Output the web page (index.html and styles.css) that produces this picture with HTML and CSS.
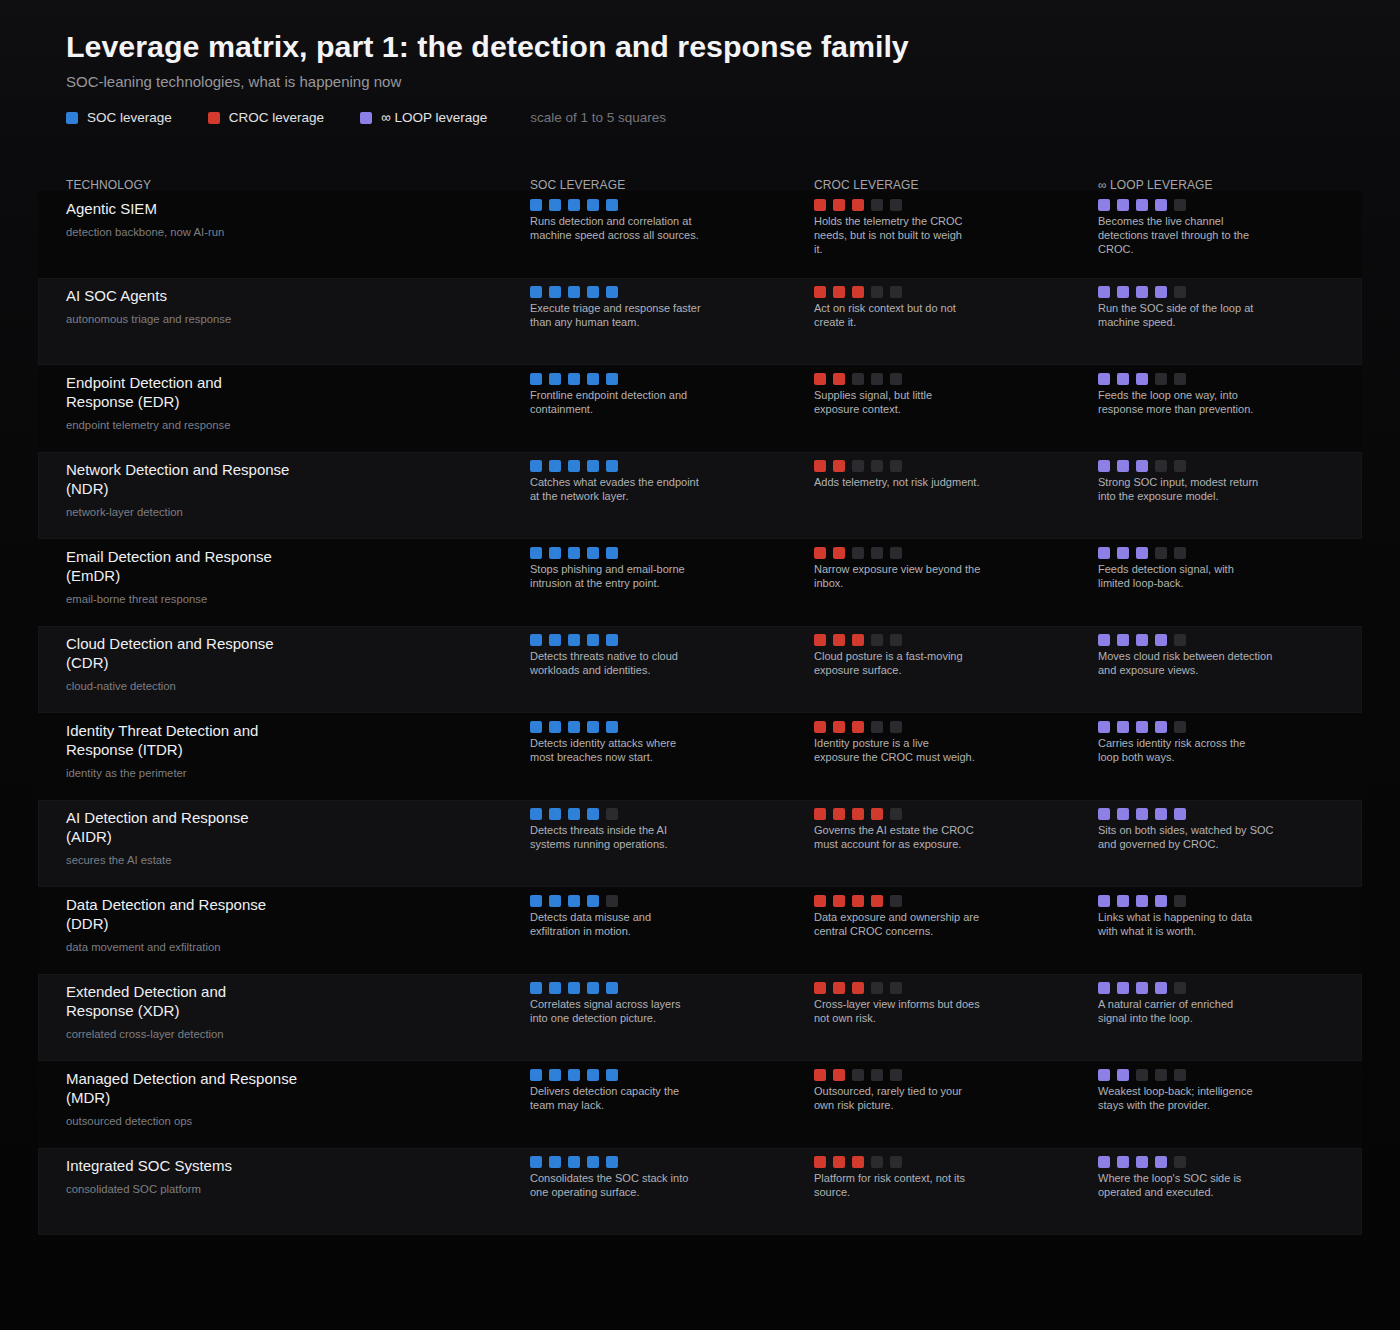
FILE: index.html
```html
<!DOCTYPE html>
<html lang="en">
<head>
<meta charset="utf-8">
<title>Leverage matrix, part 1</title>
<link rel="stylesheet" href="styles.css">
</head>
<body>
<div class="page">
  <header class="intro">
    <h1 class="title">Leverage matrix, part 1: the detection and response family</h1>
    <p class="subtitle">SOC-leaning technologies, what is happening now</p>
    <div class="legend">
      <span class="legend-item"><span class="sq soc"></span>SOC leverage</span>
      <span class="legend-item"><span class="sq croc"></span>CROC leverage</span>
      <span class="legend-item"><span class="sq loop"></span>∞ LOOP leverage</span>
      <span class="legend-note">scale of 1 to 5 squares</span>
    </div>
  </header>

  <div class="matrix">
    <div class="head">
      <div>TECHNOLOGY</div>
      <div>SOC LEVERAGE</div>
      <div>CROC LEVERAGE</div>
      <div>∞ LOOP LEVERAGE</div>
    </div>

    <div class="row dark">
      <div class="tech"><div class="name">Agentic SIEM</div><div class="tag">detection backbone, now AI-run</div></div>
      <div class="cell"><div class="bar soc s5"><i></i><i></i><i></i><i></i><i></i></div><p>Runs detection and correlation at<br>machine speed across all sources.</p></div>
      <div class="cell"><div class="bar croc s3"><i></i><i></i><i></i><i></i><i></i></div><p>Holds the telemetry the CROC<br>needs, but is not built to weigh<br>it.</p></div>
      <div class="cell"><div class="bar loop s4"><i></i><i></i><i></i><i></i><i></i></div><p>Becomes the live channel<br>detections travel through to the<br>CROC.</p></div>
    </div>

    <div class="row light">
      <div class="tech"><div class="name">AI SOC Agents</div><div class="tag">autonomous triage and response</div></div>
      <div class="cell"><div class="bar soc s5"><i></i><i></i><i></i><i></i><i></i></div><p>Execute triage and response faster<br>than any human team.</p></div>
      <div class="cell"><div class="bar croc s3"><i></i><i></i><i></i><i></i><i></i></div><p>Act on risk context but do not<br>create it.</p></div>
      <div class="cell"><div class="bar loop s4"><i></i><i></i><i></i><i></i><i></i></div><p>Run the SOC side of the loop at<br>machine speed.</p></div>
    </div>

    <div class="row dark">
      <div class="tech"><div class="name">Endpoint Detection and<br>Response (EDR)</div><div class="tag">endpoint telemetry and response</div></div>
      <div class="cell"><div class="bar soc s5"><i></i><i></i><i></i><i></i><i></i></div><p>Frontline endpoint detection and<br>containment.</p></div>
      <div class="cell"><div class="bar croc s2"><i></i><i></i><i></i><i></i><i></i></div><p>Supplies signal, but little<br>exposure context.</p></div>
      <div class="cell"><div class="bar loop s3"><i></i><i></i><i></i><i></i><i></i></div><p>Feeds the loop one way, into<br>response more than prevention.</p></div>
    </div>

    <div class="row light">
      <div class="tech"><div class="name">Network Detection and Response<br>(NDR)</div><div class="tag">network-layer detection</div></div>
      <div class="cell"><div class="bar soc s5"><i></i><i></i><i></i><i></i><i></i></div><p>Catches what evades the endpoint<br>at the network layer.</p></div>
      <div class="cell"><div class="bar croc s2"><i></i><i></i><i></i><i></i><i></i></div><p>Adds telemetry, not risk judgment.</p></div>
      <div class="cell"><div class="bar loop s3"><i></i><i></i><i></i><i></i><i></i></div><p>Strong SOC input, modest return<br>into the exposure model.</p></div>
    </div>

    <div class="row dark">
      <div class="tech"><div class="name">Email Detection and Response<br>(EmDR)</div><div class="tag">email-borne threat response</div></div>
      <div class="cell"><div class="bar soc s5"><i></i><i></i><i></i><i></i><i></i></div><p>Stops phishing and email-borne<br>intrusion at the entry point.</p></div>
      <div class="cell"><div class="bar croc s2"><i></i><i></i><i></i><i></i><i></i></div><p>Narrow exposure view beyond the<br>inbox.</p></div>
      <div class="cell"><div class="bar loop s3"><i></i><i></i><i></i><i></i><i></i></div><p>Feeds detection signal, with<br>limited loop-back.</p></div>
    </div>

    <div class="row light">
      <div class="tech"><div class="name">Cloud Detection and Response<br>(CDR)</div><div class="tag">cloud-native detection</div></div>
      <div class="cell"><div class="bar soc s5"><i></i><i></i><i></i><i></i><i></i></div><p>Detects threats native to cloud<br>workloads and identities.</p></div>
      <div class="cell"><div class="bar croc s3"><i></i><i></i><i></i><i></i><i></i></div><p>Cloud posture is a fast-moving<br>exposure surface.</p></div>
      <div class="cell"><div class="bar loop s4"><i></i><i></i><i></i><i></i><i></i></div><p>Moves cloud risk between detection<br>and exposure views.</p></div>
    </div>

    <div class="row dark">
      <div class="tech"><div class="name">Identity Threat Detection and<br>Response (ITDR)</div><div class="tag">identity as the perimeter</div></div>
      <div class="cell"><div class="bar soc s5"><i></i><i></i><i></i><i></i><i></i></div><p>Detects identity attacks where<br>most breaches now start.</p></div>
      <div class="cell"><div class="bar croc s3"><i></i><i></i><i></i><i></i><i></i></div><p>Identity posture is a live<br>exposure the CROC must weigh.</p></div>
      <div class="cell"><div class="bar loop s4"><i></i><i></i><i></i><i></i><i></i></div><p>Carries identity risk across the<br>loop both ways.</p></div>
    </div>

    <div class="row light">
      <div class="tech"><div class="name">AI Detection and Response<br>(AIDR)</div><div class="tag">secures the AI estate</div></div>
      <div class="cell"><div class="bar soc s4"><i></i><i></i><i></i><i></i><i></i></div><p>Detects threats inside the AI<br>systems running operations.</p></div>
      <div class="cell"><div class="bar croc s4"><i></i><i></i><i></i><i></i><i></i></div><p>Governs the AI estate the CROC<br>must account for as exposure.</p></div>
      <div class="cell"><div class="bar loop s5"><i></i><i></i><i></i><i></i><i></i></div><p>Sits on both sides, watched by SOC<br>and governed by CROC.</p></div>
    </div>

    <div class="row dark">
      <div class="tech"><div class="name">Data Detection and Response<br>(DDR)</div><div class="tag">data movement and exfiltration</div></div>
      <div class="cell"><div class="bar soc s4"><i></i><i></i><i></i><i></i><i></i></div><p>Detects data misuse and<br>exfiltration in motion.</p></div>
      <div class="cell"><div class="bar croc s4"><i></i><i></i><i></i><i></i><i></i></div><p>Data exposure and ownership are<br>central CROC concerns.</p></div>
      <div class="cell"><div class="bar loop s4"><i></i><i></i><i></i><i></i><i></i></div><p>Links what is happening to data<br>with what it is worth.</p></div>
    </div>

    <div class="row light">
      <div class="tech"><div class="name">Extended Detection and<br>Response (XDR)</div><div class="tag">correlated cross-layer detection</div></div>
      <div class="cell"><div class="bar soc s5"><i></i><i></i><i></i><i></i><i></i></div><p>Correlates signal across layers<br>into one detection picture.</p></div>
      <div class="cell"><div class="bar croc s3"><i></i><i></i><i></i><i></i><i></i></div><p>Cross-layer view informs but does<br>not own risk.</p></div>
      <div class="cell"><div class="bar loop s4"><i></i><i></i><i></i><i></i><i></i></div><p>A natural carrier of enriched<br>signal into the loop.</p></div>
    </div>

    <div class="row dark">
      <div class="tech"><div class="name">Managed Detection and Response<br>(MDR)</div><div class="tag">outsourced detection ops</div></div>
      <div class="cell"><div class="bar soc s5"><i></i><i></i><i></i><i></i><i></i></div><p>Delivers detection capacity the<br>team may lack.</p></div>
      <div class="cell"><div class="bar croc s2"><i></i><i></i><i></i><i></i><i></i></div><p>Outsourced, rarely tied to your<br>own risk picture.</p></div>
      <div class="cell"><div class="bar loop s2"><i></i><i></i><i></i><i></i><i></i></div><p>Weakest loop-back; intelligence<br>stays with the provider.</p></div>
    </div>

    <div class="row light">
      <div class="tech"><div class="name">Integrated SOC Systems</div><div class="tag">consolidated SOC platform</div></div>
      <div class="cell"><div class="bar soc s5"><i></i><i></i><i></i><i></i><i></i></div><p>Consolidates the SOC stack into<br>one operating surface.</p></div>
      <div class="cell"><div class="bar croc s3"><i></i><i></i><i></i><i></i><i></i></div><p>Platform for risk context, not its<br>source.</p></div>
      <div class="cell"><div class="bar loop s4"><i></i><i></i><i></i><i></i><i></i></div><p>Where the loop's SOC side is<br>operated and executed.</p></div>
    </div>
  </div>
</div>
</body>
</html>
```

FILE: styles.css
```css
* { box-sizing: border-box; }

html, body {
  margin: 0;
  padding: 0;
}

body {
  background: linear-gradient(180deg, #0f0f12 0px, #0b0b0d 160px, #070708 600px, #050505 1330px);
  min-height: 1330px;
  font-family: "Liberation Sans", Arial, Helvetica, sans-serif;
  color: #e8e8ea;
}

.page {
  padding: 28px 38px 60px 38px;
}

.intro {
  padding: 0 28px;
}

.title {
  margin: 0;
  font-size: 30.4px;
  line-height: 36px;
  font-weight: 700;
  color: #f4f4f6;
  letter-spacing: 0;
}

.subtitle {
  margin: 9px 0 0 0;
  font-size: 15px;
  line-height: 18px;
  color: #98989c;
}

.legend {
  display: flex;
  align-items: center;
  margin-top: 18px;
  font-size: 13.5px;
  line-height: 18px;
  color: #e2e2e4;
}

.legend-item {
  display: flex;
  align-items: center;
  margin-right: 36px;
}

.legend-item .sq {
  width: 12px;
  height: 12px;
  border-radius: 2px;
  margin-right: 9px;
}

.legend-note {
  margin-left: 7px;
  color: #76767a;
}

.sq.soc { background: #2f80d9; }
.sq.croc { background: #d13a2c; }
.sq.loop { background: #8c7fe6; }

.matrix {
  margin-top: 51px;
}

.head,
.row {
  display: grid;
  grid-template-columns: 464px 284px 284px 1fr;
  padding: 0 28px;
}

.head {
  font-size: 12px;
  line-height: 14px;
  color: #a6a6aa;
  letter-spacing: 0.1px;
  height: 13px;
}

.row {
  height: 87px;
  padding-top: 8px;
}

.row.dark {
  background: #070708;
}

.row.light {
  background: #111114;
  box-shadow: inset 0 0 0 1px #16161a;
}

.name {
  font-size: 15px;
  line-height: 19px;
  color: #f0f0f2;
}

.tag {
  margin-top: 7px;
  font-size: 11.3px;
  line-height: 14px;
  color: #7e7e82;
}

.bar {
  display: flex;
  gap: 7px;
  height: 12px;
  margin-top: 0;
}

.bar i {
  display: block;
  width: 12px;
  height: 12px;
  border-radius: 2px;
  background: #2a2a2f;
}

.bar.soc.s5 i, .bar.soc.s4 i:nth-child(-n+4) { background: #2f80d9; }
.bar.croc.s2 i:nth-child(-n+2),
.bar.croc.s3 i:nth-child(-n+3),
.bar.croc.s4 i:nth-child(-n+4) { background: #d13a2c; }
.bar.loop.s2 i:nth-child(-n+2),
.bar.loop.s3 i:nth-child(-n+3),
.bar.loop.s4 i:nth-child(-n+4),
.bar.loop.s5 i { background: #8c7fe6; }

.cell p {
  margin: 3px 0 0 0;
  font-size: 11px;
  line-height: 14px;
  color: #b2b2b6;
}
```
